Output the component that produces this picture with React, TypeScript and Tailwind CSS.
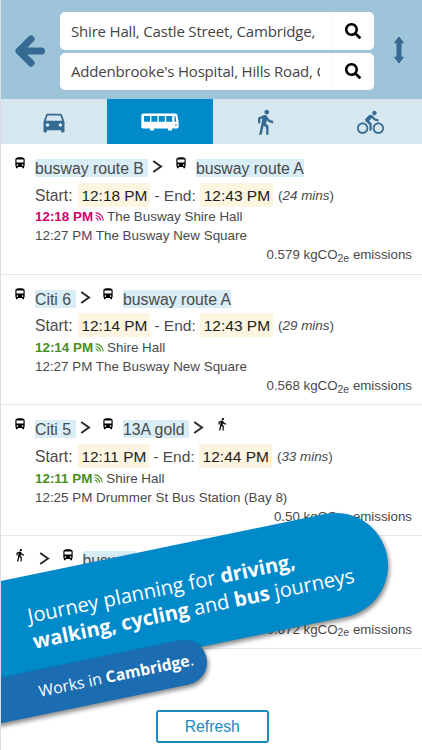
import React from 'react';
import { FaSearch } from 'react-icons/fa';
import {
  MdDirectionsBike,
  MdDirectionsBus,
  MdDirectionsCar,
  MdDirectionsWalk,
} from 'react-icons/md';

type Leg = { mode: 'bus' | 'walk'; label?: string };

type Journey = {
  legs: Leg[];
  start?: string;
  end?: string;
  duration?: string;
  late?: boolean;
  firstStop?: string;
  change?: string;
  emissions: string;
};

const journeys: Journey[] = [
  {
    legs: [
      { mode: 'bus', label: 'busway route B' },
      { mode: 'bus', label: 'busway route A' },
    ],
    start: '12:18 PM',
    end: '12:43 PM',
    duration: '24 mins',
    late: true,
    firstStop: 'The Busway Shire Hall',
    change: '12:27 PM The Busway New Square',
    emissions: '0.579',
  },
  {
    legs: [
      { mode: 'bus', label: 'Citi 6' },
      { mode: 'bus', label: 'busway route A' },
    ],
    start: '12:14 PM',
    end: '12:43 PM',
    duration: '29 mins',
    firstStop: 'Shire Hall',
    change: '12:27 PM The Busway New Square',
    emissions: '0.568',
  },
  {
    legs: [
      { mode: 'bus', label: 'Citi 5' },
      { mode: 'bus', label: '13A gold' },
      { mode: 'walk' },
    ],
    start: '12:11 PM',
    end: '12:44 PM',
    duration: '33 mins',
    firstStop: 'Shire Hall',
    change: '12:25 PM Drummer St Bus Station (Bay 8)',
    emissions: '0.50',
  },
  {
    legs: [{ mode: 'walk' }, { mode: 'bus', label: 'busway' }],
    emissions: '0.672',
  },
];

function BackArrow() {
  return (
    <svg width="32" height="34" viewBox="0 0 32 34" fill="none" stroke="#356a92" strokeLinecap="round">
      <path d="M5 17 17 5M5 17l12 12" strokeWidth="7" strokeLinejoin="round" />
      <path d="M6 17h21.5" strokeWidth="7" />
    </svg>
  );
}

function SwapArrow() {
  return (
    <svg width="12" height="28" viewBox="0 0 12 28" fill="#356a92">
      <path d="M6 1 10.5 6.8H8v14.4h2.5L6 27 1.5 21.2H4V6.8H1.5z" stroke="#356a92" strokeLinejoin="round" />
    </svg>
  );
}

function Coach() {
  return (
    <svg width="38" height="18" viewBox="0 0 38 18">
      <path d="M2.6.6h31c1.8 0 2.7.8 3 2.4l1 6.5v4.2c0 1-.6 1.7-1.6 1.7H2.2C1 15.4.3 14.8.3 13.7V2.9C.3 1.4 1.1.6 2.6.6z" fill="#fff" />
      <path d="M9 15h4v1.7c0 .4-.3.7-.7.7H9.700c-.4 0-.7-.3-.7-.7zM27 15h4v1.7c0 .4-.3.7-.7.7h-2.6c-.4 0-.7-.3-.7-.7z" fill="#fff" />
      <path d="M3 3h6v5.7H3zM10.4 3h6v5.7h-6zM17.8 3h6v5.7h-6zM25.2 3h6v5.7h-6zM33.5 3h1l.8 5.7h-1.8z" fill="#008ac9" />
      <path d="M34.3 11.2h1.2V13h-1.2z" fill="#008ac9" />
    </svg>
  );
}

function LiveIcon() {
  return (
    <svg className="shrink-0" width="9" height="9" viewBox="0 0 9 9" fill="none" stroke="currentColor" strokeWidth="1.2">
      <path d="M.5.8a7.7 7.7 0 0 1 7.7 7.7M.5 3.5a5 5 0 0 1 5 5M.5 6A2.5 2.5 0 0 1 3 8.5" />
    </svg>
  );
}

function Chevron() {
  return (
    <svg className="mt-4 shrink-0" width="11" height="13" viewBox="0 0 11 13" fill="none" stroke="#2b2b2b" strokeWidth="2">
      <path d="M1.2 1 9 6.5 1.2 12" />
    </svg>
  );
}

function SearchField({ value }: { value: string }) {
  return (
    <div className="flex h-[37.5px] w-[314px] items-center rounded-[5px] bg-white">
      <div className="ml-[11px] w-[249px] overflow-hidden text-[15px] leading-[22px] tracking-[-0.18px] whitespace-nowrap text-[#444]">
        {value}
      </div>
      <button className="ml-[11px] flex h-full grow items-center justify-center border-l border-[#f6f6f6] text-black">
        <FaSearch size={16} />
      </button>
    </div>
  );
}

function Legs({ legs }: { legs: Leg[] }) {
  return (
    <div className="flex h-[40.5px] items-start text-[15.8px]">
      {legs.map((leg, i) => {
        const Icon = leg.mode === 'bus' ? MdDirectionsBus : MdDirectionsWalk;
        const last = i === legs.length - 1;
        return (
          <React.Fragment key={i}>
            <Icon className="mt-3 mr-2 shrink-0 text-black" size={14} />
            {leg.label && (
              <span className={`mt-[15px] h-[18px] bg-[#d9edf7] leading-[19px] ${last ? '' : 'pr-[4.5px]'}`}>
                {leg.label}
              </span>
            )}
            {!last && (
              <span className="mr-[10.5px] ml-1 flex">
                <Chevron />
              </span>
            )}
          </React.Fragment>
        );
      })}
    </div>
  );
}

function JourneyRow({ journey }: { journey: Journey }) {
  return (
    <div className="flex h-[130.7px] shrink-0 flex-col border-b border-[#e8e8ee] pl-3 text-[15.7px] text-[#4a4a4a] last:h-[113px]">
      <Legs legs={journey.legs} />
      {journey.start && (
        <div className="flex h-6 pl-[22px] leading-[26px] whitespace-nowrap">
          <span>Start:</span>
          <span className="ml-[5px] h-6 bg-[#fcf5e0] pr-[3px] pl-1 text-[15.4px] text-[#222]">{journey.start}</span>
          <span className="ml-1 text-[15.5px]">- End:</span>
          <span className="ml-1 h-6 bg-[#fcf5e0] pr-[3px] pl-1 text-[15.5px] text-[#222]">{journey.end}</span>
          <span className="ml-[5px] text-[13.4px]">
            (<i>{journey.duration}</i>)
          </span>
        </div>
      )}
      <div className="flex grow flex-col pt-[0.6px] pl-[22px] text-[13.4px] leading-[19px]">
        {journey.firstStop && (
          <div className="flex items-center">
            <span className={`flex items-center gap-0.5 font-bold ${journey.late ? 'text-[#d6006c]' : 'text-[#4a8f1c]'}`}>
              {journey.start}
              <LiveIcon />
            </span>
            <span className="ml-[3px]">{journey.firstStop}</span>
          </div>
        )}
        {journey.change && <div>{journey.change}</div>}
        <div className="mt-auto mb-[9.5px] h-[19px] pr-[10px] text-right text-[13.3px]">
          {journey.emissions} kgCO<sub className="text-[10.5px]">2e</sub> emissions
        </div>
      </div>
    </div>
  );
}

function App() {
  return (
    <div className="relative flex h-[750px] w-[422px] flex-col overflow-hidden border-l border-[#dcdce2] bg-white font-['Liberation_Sans',Arial,sans-serif]">
      <header className="flex h-[99px] shrink-0 items-center bg-[#9dc4d8] pt-[3px] font-['Open_Sans',sans-serif]">
        <button className="ml-[13px] flex w-[46px]">
          <BackArrow />
        </button>
        <div className="flex flex-col gap-[3px]">
          <SearchField value="Shire Hall, Castle Street, Cambridge," />
          <SearchField value="Addenbrooke's Hospital, Hills Road, C" />
        </div>
        <button className="mb-[3px] ml-[19px]">
          <SwapArrow />
        </button>
      </header>

      <nav className="flex h-[45px] shrink-0 bg-[#d7e7ef] text-[#356a92]">
        <button className="flex w-[105.7px] shrink-0 items-center justify-center">
          <MdDirectionsCar size={28} />
        </button>
        <button className="flex w-[106.3px] shrink-0 items-center justify-center bg-[#008ac9]">
          <Coach />
        </button>
        <button className="flex w-[105px] shrink-0 items-center justify-center">
          <MdDirectionsWalk size={28} />
        </button>
        <button className="flex grow items-center justify-center pt-0.5 pl-px">
          <MdDirectionsBike size={27} />
        </button>
      </nav>

      <main className="flex shrink-0 flex-col">
        {journeys.map((journey, i) => (
          <JourneyRow key={i} journey={journey} />
        ))}
      </main>

      <button className="mt-[60.9px] ml-[155px] h-[33px] w-[112.5px] shrink-0 rounded-[3px] border-2 border-[#2089bd] text-[15.7px] text-[#2089bd]">
        Refresh
      </button>

      {/* promo ribbons over the list */}
      <div className="absolute top-[512.5px] left-[-54px] h-[105px] w-[440.5px] origin-[388px_52.5px] -rotate-[11.7deg] rounded-r-full bg-[#008ac9] pt-[26px] pl-[77px] font-['Open_Sans',sans-serif] text-[20.15px] leading-[26px] whitespace-nowrap text-white shadow-[1px_3px_4px_rgba(0,0,0,0.45)]">
        <div>
          Journey planning for <b>driving,</b>
        </div>
        <div>
          <b>walking, cycling</b> and <b>bus</b> journeys
        </div>
      </div>
      <div className="absolute top-[639.5px] left-[-55px] h-[45px] w-[260.5px] origin-[238px_22.5px] -rotate-[11.7deg] rounded-r-full bg-[#1b6cb0] pl-[90px] font-['Open_Sans',sans-serif] text-[15.8px] leading-[43px] whitespace-nowrap text-white shadow-[1px_3px_4px_rgba(0,0,0,0.45)]">
        Works in <b>Cambridge</b>.
      </div>
    </div>
  );
}

export default App;
